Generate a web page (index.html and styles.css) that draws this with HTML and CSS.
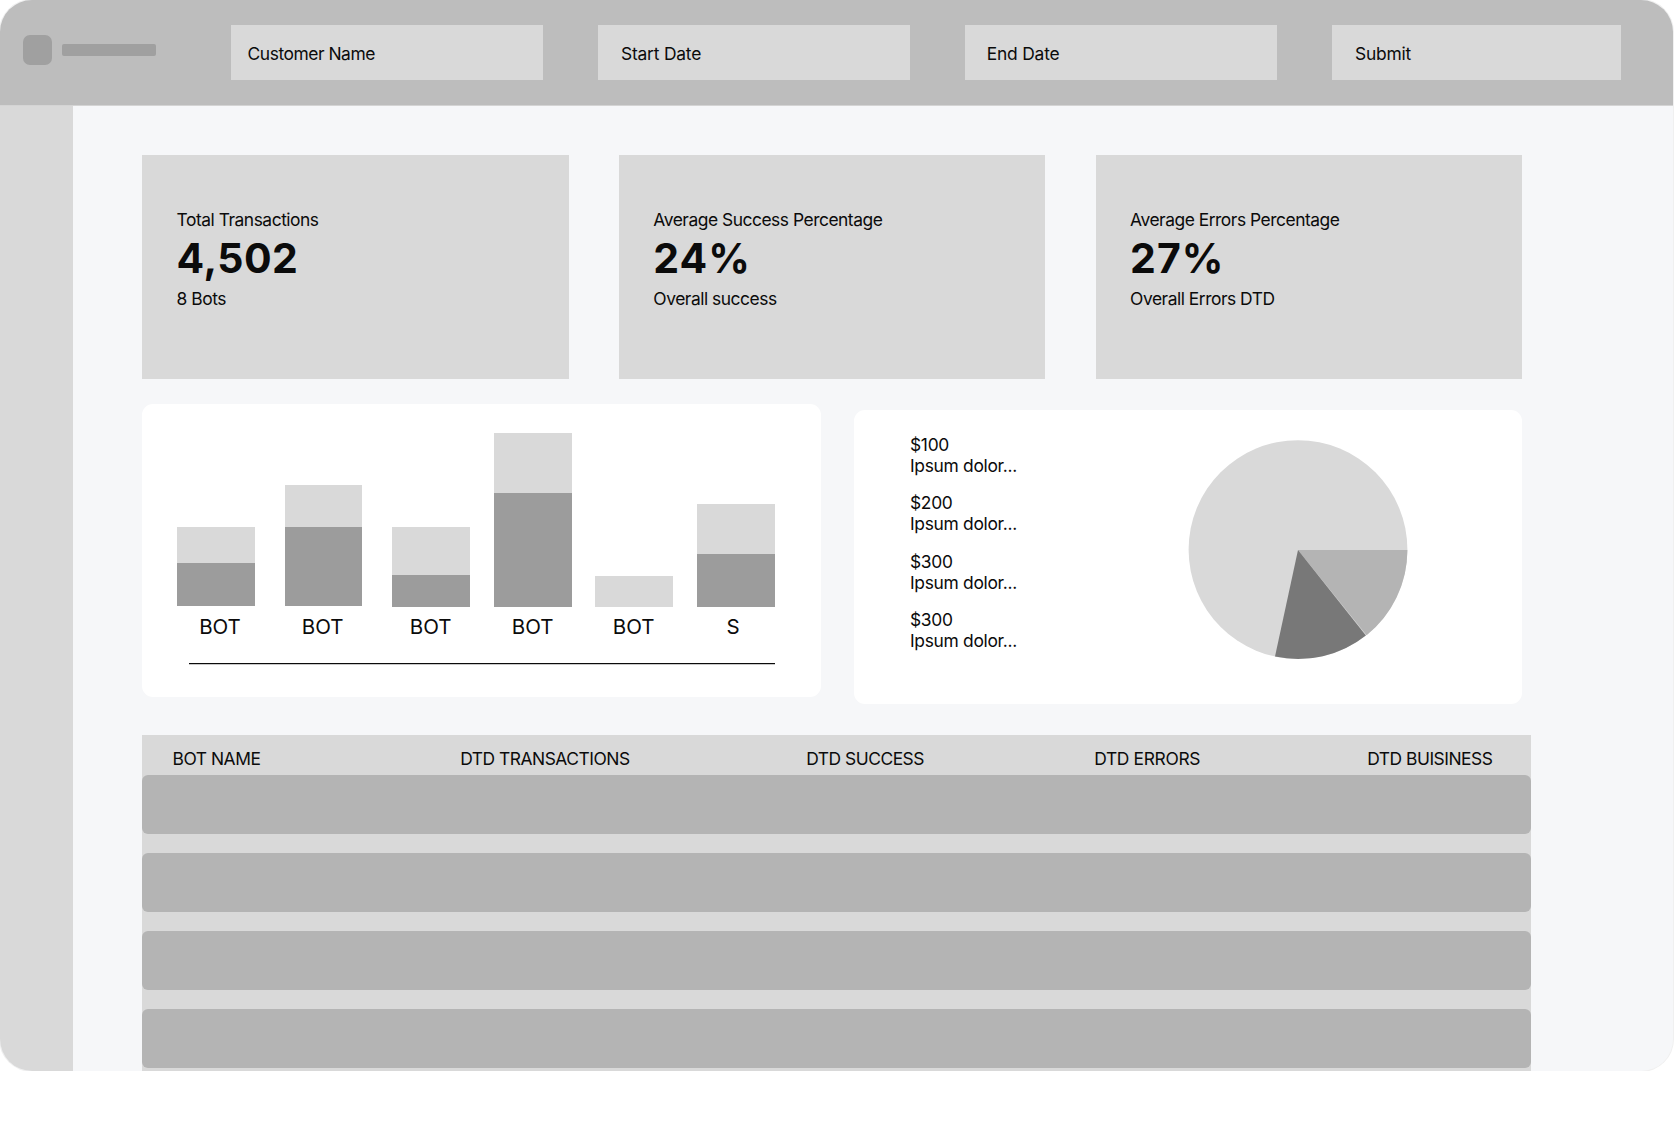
FILE: index.html
```html
<!DOCTYPE html>
<html lang="en">
<head>
<meta charset="utf-8">
<title>Bot Dashboard</title>
<link rel="stylesheet" href="styles.css">
</head>
<body>
<div class="app">
  <header class="topbar">
    <div class="brand"><span class="brand-mark"></span><span class="brand-name"></span></div>
    <div class="filters">
      <div class="filter filter-customer">Customer Name</div>
      <div class="filter filter-start">Start Date</div>
      <div class="filter filter-end">End Date</div>
      <div class="filter filter-submit">Submit</div>
    </div>
  </header>
  <div class="body">
    <nav class="sidebar"></nav>
    <main class="content">
      <section class="stats">
        <article class="stat"><p>Total Transactions</p><strong class="count">4,502</strong><p>8 Bots</p></article>
        <article class="stat"><p>Average Success Percentage</p><strong>24%</strong><p>Overall success</p></article>
        <article class="stat"><p>Average Errors Percentage</p><strong>27%</strong><p>Overall Errors DTD</p></article>
      </section>
      <section class="charts">
        <div class="panel bar-panel">
          <div class="bars">
            <div class="bar bar-raised"><i class="light" style="height:36px"></i><i class="dark" style="height:43px"></i></div>
            <div class="bar bar-raised"><i class="light" style="height:42px"></i><i class="dark" style="height:79px"></i></div>
            <div class="bar"><i class="light" style="height:48px"></i><i class="dark" style="height:32px"></i></div>
            <div class="bar"><i class="light" style="height:60px"></i><i class="dark" style="height:114px"></i></div>
            <div class="bar"><i class="light" style="height:31px"></i></div>
            <div class="bar"><i class="light" style="height:50px"></i><i class="dark" style="height:53px"></i></div>
          </div>
          <div class="bar-labels"><span>BOT</span><span>BOT</span><span>BOT</span><span>BOT</span><span>BOT</span><span>S</span></div>
          <div class="axis"></div>
        </div>
        <div class="panel pie-panel">
          <ul class="legend">
            <li>$100<br>Ipsum dolor...</li>
            <li>$200<br>Ipsum dolor...</li>
            <li>$300<br>Ipsum dolor...</li>
            <li>$300<br>Ipsum dolor...</li>
          </ul>
          <svg class="pie" width="220" height="220" viewBox="-110 -110 220 220">
            <circle cy="-.4" r="109.4" fill="#d9d9d9"/>
            <path d="M0 0H109.4A109.4 109.4 0 0 1 68.6 85.2Z" fill="#b4b4b4"/>
            <path d="M0 0L67.9 85.5A109.4 109.4 0 0 1-23 106.6Z" fill="#787878"/>
          </svg>
        </div>
      </section>
      <section class="table">
        <div class="table-head"><span>BOT NAME</span><span>DTD TRANSACTIONS</span><span>DTD SUCCESS</span><span class="errors">DTD ERRORS</span><span>DTD BUISINESS</span></div>
        <div class="row"></div>
        <div class="row"></div>
        <div class="row"></div>
        <div class="row"></div>
      </section>
    </main>
  </div>
</div>
</body>
</html>
```
FILE: styles.css
```css
* { box-sizing: border-box; }
body {
  margin: 0;
  background: #fff;
  color: #0b0b0b;
  font: 400 17.4px/21px Inter, "Liberation Sans", sans-serif;
  letter-spacing: -.41px;
}
p, ul { margin: 0; padding: 0; list-style: none; }

.app {
  width: 1673px;
  height: 1071px;
  border-radius: 32px;
  overflow: hidden;
  background: #f6f7f9;
  box-shadow: 0 0 0 1px #f0f0f0;
  display: flex;
  flex-direction: column;
}

/* Top bar */
.topbar {
  flex: none;
  height: 106px;
  border-bottom: 1px solid #d4d4d4;
  background: #bdbdbd;
  display: flex;
  align-items: flex-start;
}
.brand { width: 231px; padding: 35px 0 0 23px; display: flex; align-items: center; gap: 10px; }
.brand-mark { width: 29px; height: 30px; border-radius: 7px; background: #a0a0a0; }
.brand-name { width: 94px; height: 12px; border-radius: 2px; background: #a0a0a0; }
.filters {
  padding-top: 25px;
  display: grid;
  grid-template-columns: 312px 312px 312px 289px;
  column-gap: 55px;
}
.filter { height: 55px; padding: 18px 0 0 23px; background: #d9d9d9; letter-spacing: -.2px; }
.filter-customer { padding-left: 16.6px; letter-spacing: -.45px; }
.filter-end { padding-left: 21.8px; }

/* Body */
.body { flex: 1; display: flex; min-height: 0; }
.sidebar { flex: none; width: 73px; background: #d9d9d9; }
.content { padding: 49px 0 0 69px; }

.stats { display: grid; grid-template-columns: repeat(3, 426.5px); column-gap: 50.25px; }
.stat { height: 224px; padding: 54px 0 0 34.6px; background: #d9d9d9; letter-spacing: -.47px; }
.stat strong { display: block; font-size: 41px; line-height: 50px; margin: 3px 0 5px; letter-spacing: 1px; }
.stat .count { letter-spacing: .45px; }

/* Charts */
.charts { display: flex; gap: 33px; margin-top: 25px; }
.panel { background: #fff; border-radius: 11px; }
.bar-panel { width: 679px; height: 293px; padding: 29px 46px 0 35px; }
.pie-panel { width: 668px; height: 294px; margin-top: 6px; display: flex; padding: 24px 0 0 56px; }
.bars {
  height: 174px;
  display: grid;
  grid-template-columns: 107.6px 107.4px 102px 101px 102px 78px;
  align-items: end;
}
.bar { width: 77.6px; display: flex; flex-direction: column; }
.bar-raised { padding-bottom: 1px; }
.light { background: #d9d9d9; }
.dark { background: #9c9c9c; }
.bar-labels {
  display: grid;
  grid-template-columns: 102.6px 108px 102px 101px 99.4px 78px;
  padding: 7px 0 0 4px;
  font-size: 20.5px;
  line-height: 26px;
  letter-spacing: 0;
}
.bar-labels span { width: 78px; text-align: center; }
.axis { height: 1px; margin: 23px 0 0 12px; background: #0b0b0b; box-shadow: 0 1px #c8c8c8; }

.legend { width: 278px; display: grid; gap: 16.3px; align-content: start; letter-spacing: -.3px; }
.pie { margin-top: 6px; }

/* Table */
.table { width: 1389px; height: 336px; margin-top: 31px; background: #d9d9d9; }
.table-head {
  height: 40px;
  padding: 13px 0 0 30.6px;
  display: grid;
  grid-template-columns: 287.6px 346px 288px 273px auto;
  letter-spacing: -.47px;
}
.table-head .errors { letter-spacing: -.33px; }
.row { height: 59px; border-radius: 6px; background: #b4b4b4; margin-bottom: 19px; }
```
